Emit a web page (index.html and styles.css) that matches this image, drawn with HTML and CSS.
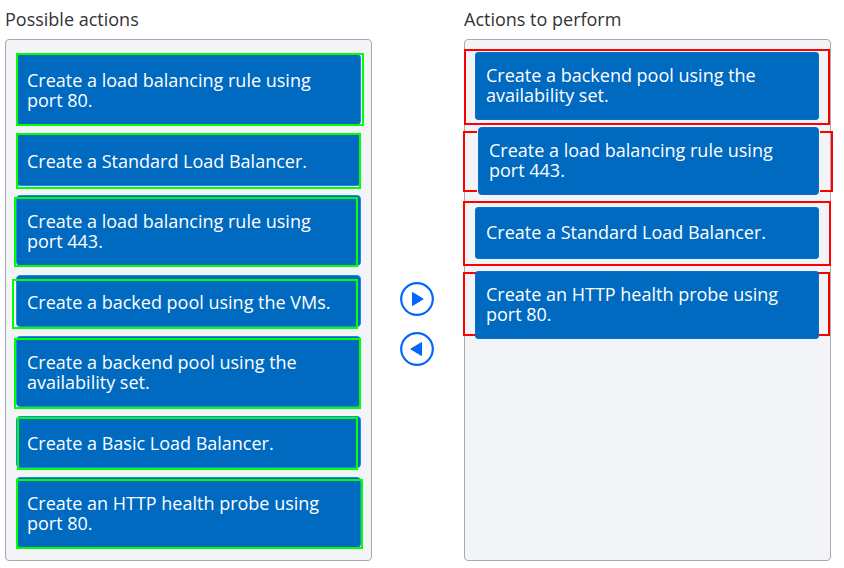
FILE: index.html
```html
<!DOCTYPE html>
<html lang="en">
<head>
<meta charset="utf-8">
<title>Actions</title>
<link rel="stylesheet" href="styles.css">
</head>
<body>
<main class="board">
  <section class="column">
    <h2 class="title">Possible actions</h2>
    <ul class="panel source">
      <li class="item"><button class="card" type="button">Create a load balancing rule using port 80.</button><span class="mark s1"></span></li>
      <li class="item"><button class="card" type="button">Create a Standard Load Balancer.</button><span class="mark s2"></span></li>
      <li class="item"><button class="card" type="button">Create a load balancing rule using port 443.</button><span class="mark s3"></span></li>
      <li class="item"><button class="card" type="button">Create a backed pool using the VMs.</button><span class="mark s4"></span></li>
      <li class="item"><button class="card" type="button">Create a backend pool using the availability set.</button><span class="mark s5"></span></li>
      <li class="item"><button class="card" type="button">Create a Basic Load Balancer.</button><span class="mark s6"></span></li>
      <li class="item"><button class="card" type="button">Create an HTTP health probe using port 80.</button><span class="mark s7"></span></li>
    </ul>
  </section>
  <div class="movers">
    <button class="mover" type="button" aria-label="Add action">
      <svg viewBox="0 0 34 34" width="34" height="34"><circle cx="17" cy="17" r="15.8"/><path d="M12.5 10.5 23.2 17 12.5 23.5Z"/></svg>
    </button>
    <button class="mover" type="button" aria-label="Remove action">
      <svg viewBox="0 0 34 34" width="34" height="34"><circle cx="17" cy="17" r="15.8"/><path d="M21.5 10.5 10.8 17 21.5 23.5Z"/></svg>
    </button>
  </div>
  <section class="column">
    <h2 class="title">Actions to perform</h2>
    <ul class="panel target">
      <li class="item"><span class="mark t1"></span><button class="card" type="button">Create a backend pool using the availability set.</button></li>
      <li class="item near"><span class="mark t2"></span><button class="card cut" type="button">Create a load balancing rule using port 443.</button></li>
      <li class="item"><span class="mark t3"></span><button class="card" type="button">Create a Standard Load Balancer.</button></li>
      <li class="item"><span class="mark t4"></span><button class="card" type="button">Create an HTTP health probe using port 80.</button></li>
    </ul>
  </section>
</main>
</body>
</html>
```
FILE: styles.css
```css
* { box-sizing: border-box; }

body {
  margin: 0;
  background: #fff;
  font-family: "Open Sans", "Noto Sans", sans-serif;
}

.board {
  display: grid;
  grid-template-columns: 1fr 92px 1fr;
  padding: 0 13px 7px 5px;
}

.column {
  display: flex;
  flex-direction: column;
  min-width: 0;
}

.title {
  margin: 0;
  padding: 7px 0 8px;
  color: #333;
  font-size: 18px;
  font-weight: 500;
  line-height: 24px;
}

.panel {
  display: flex;
  flex: 1;
  flex-direction: column;
  margin: 0;
  padding: 14px 10px 12px;
  border: 1px solid #a9a9a9;
  border-radius: 4px;
  background: #f3f4f7;
  list-style: none;
}

.source { gap: 9px; }

.target {
  padding: 12px 11px 12px 10px;
  gap: 12px;
}

.item { position: relative; }
.near { margin-top: -5px; }

.card {
  position: relative;
  display: flex;
  align-items: center;
  width: 100%;
  min-height: 52px;
  padding: 15px 10px 14px;
  border: 1px solid #1c8be8;
  border-radius: 4px;
  background: #0069c0;
  color: #fff;
  font: 18px/20px "Open Sans", "Noto Sans", sans-serif;
  text-align: left;
}

.target .card {
  padding: 12px 10px 14px;
  border-color: #0872ca;
  border-radius: 3px;
}

.target .cut {
  width: auto;
  margin-left: 3px;
  outline: 1px solid #f3f4f7;
}

/* Review outlines drawn freely around the cards */
.mark {
  position: absolute;
  border: 2px solid #0f0;
  pointer-events: none;
}

.target .mark { border-color: #f00; }

.s1 { inset: -1px -3px -1px 0; }
.s2 { inset: -1px 0 -3px 0; }
.s3 { inset: 2px 3px -1px -2px; }
.s4 { inset: 4px 3px -2px -4px; }
.s5 { inset: 2px 0 -2px -2px; }
.s6 { inset: 1px 3px -2px 1px; }
.s7 { inset: 2px -2px -1px 0; }

.t1 { inset: -3px -11px -5px -11px; }
.t2 { inset: 4px -14px 3px -12px; }
.t3 { inset: -6px -12px -7px -12px; }
.t4 { inset: 1px -11px 3px -12px; }

.movers {
  display: flex;
  flex-direction: column;
  align-items: center;
  gap: 16px;
  padding: 282px 2px 0 0;
}

.mover {
  display: block;
  width: 34px;
  height: 34px;
  padding: 0;
  border: 0;
  background: none;
}

.mover svg { display: block; }
.mover circle { fill: #fff; stroke: #0566ff; stroke-width: 2.2; }
.mover path { fill: #0566ff; stroke: #0566ff; stroke-linejoin: round; }
```
